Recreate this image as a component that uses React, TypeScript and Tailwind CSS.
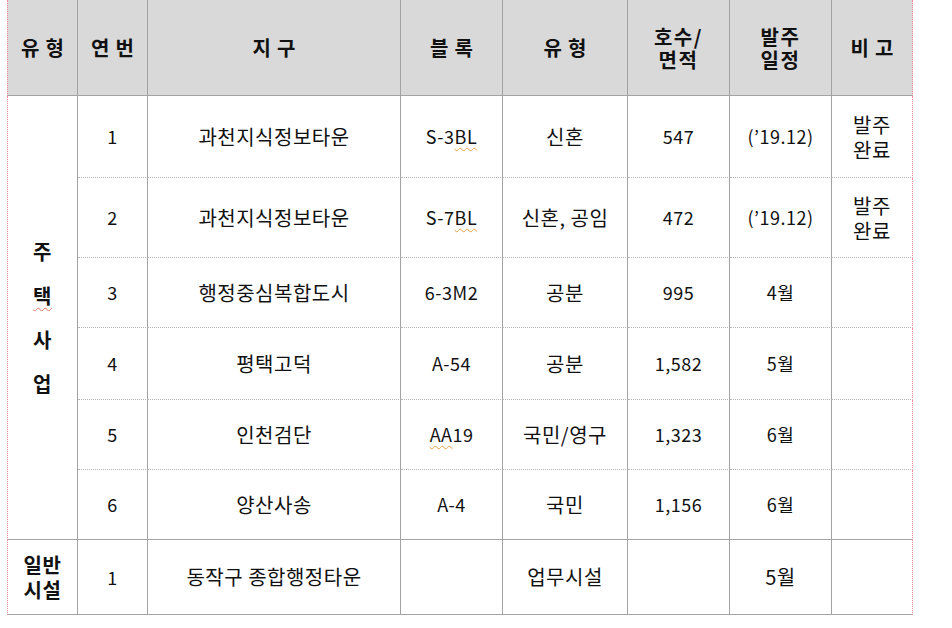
import type { ReactNode } from 'react';

const font = "font-['Noto_Sans_CJK_KR','Noto_Sans_CJK_SC',sans-serif]";

const cell = 'p-0 text-center align-middle border-r border-r-[#a3a3a3]';
const dotted = 'border-b border-b-[#b4b4b4] [border-bottom-style:dotted]!';
const solid = 'border-b border-b-[#a3a3a3]';
const pinkLeft = 'border-l border-l-[#f2899b] [border-left-style:dotted]!';
const pinkRight = 'border-r-[#f2899b] [border-right-style:dotted]!';
const num = 'text-[18px] tracking-[0.5px]';

function Sq({ children }: { children: ReactNode }) {
  return (
    <span className="underline decoration-wavy decoration-[#e8a046] decoration-1 underline-offset-[3px]">
      {children}
    </span>
  );
}

interface Row {
  no: string;
  district: ReactNode;
  block: ReactNode;
  type: string;
  units: string;
  date: string;
  note?: string[];
  h: string;
}

const rows: Row[] = [
  { no: '1', district: '과천지식정보타운', block: <>S-3<Sq>BL</Sq></>, type: '신혼', units: '547', date: '(’19.12)', note: ['발주', '완료'], h: 'h-[82px]' },
  { no: '2', district: '과천지식정보타운', block: <>S-7<Sq>BL</Sq></>, type: '신혼, 공임', units: '472', date: '(’19.12)', note: ['발주', '완료'], h: 'h-[80px]' },
  { no: '3', district: '행정중심복합도시', block: '6-3M2', type: '공분', units: '995', date: '4월', h: 'h-[70px]' },
  { no: '4', district: '평택고덕', block: 'A-54', type: '공분', units: '1,582', date: '5월', h: 'h-[72px]' },
  { no: '5', district: '인천검단', block: <><Sq>AA</Sq>19</>, type: '국민/영구', units: '1,323', date: '6월', h: 'h-[70px]' },
  { no: '6', district: '양산사송', block: 'A-4', type: '국민', units: '1,156', date: '6월', h: 'h-[70px]' },
];

export default function App() {
  return (
    <div className={`w-[952px] h-[628px] bg-white text-[#111] ${font}`}>
      <table className="ml-[7px] w-[906px] table-fixed border-separate border-spacing-0 text-[20px] tracking-[0.5px]">
        <colgroup>
          <col className="w-[71px]" />
          <col className="w-[70px]" />
          <col className="w-[253px]" />
          <col className="w-[102px]" />
          <col className="w-[125px]" />
          <col className="w-[102px]" />
          <col className="w-[102px]" />
          <col className="w-[81px]" />
        </colgroup>
        <thead>
          <tr className="h-[96px] bg-[#d9d9d9] font-bold">
            <th className={`${cell} ${solid} ${pinkLeft} tracking-[6px] pl-[6px]`}>유형</th>
            <th className={`${cell} ${solid} tracking-[6px] pl-[6px]`}>연번</th>
            <th className={`${cell} ${solid} tracking-[6px] pl-[6px]`}>지구</th>
            <th className={`${cell} ${solid} tracking-[6px] pl-[6px]`}>블록</th>
            <th className={`${cell} ${solid} tracking-[6px] pl-[6px]`}>유형</th>
            <th className={`${cell} ${solid} leading-[23px] tracking-[1.5px]`}>
              호수/
              <br />
              면적
            </th>
            <th className={`${cell} ${solid} leading-[23px] tracking-[1.5px]`}>
              발주
              <br />
              일정
            </th>
            <th className={`${cell} ${solid} ${pinkRight} tracking-[6px] pl-[6px]`}>비고</th>
          </tr>
        </thead>
        <tbody>
          {rows.map((r, i) => {
            const b = i === rows.length - 1 ? solid : dotted;
            return (
              <tr key={r.no} className={r.h}>
                {i === 0 && (
                  <td rowSpan={6} className={`${cell} ${solid} ${pinkLeft} font-bold leading-[44px]`}>
                    주
                    <br />
                    <span className="underline decoration-wavy decoration-[#e07a5a] decoration-1 underline-offset-[3px]">택</span>
                    <br />
                    사
                    <br />
                    업
                  </td>
                )}
                <td className={`${cell} ${b} ${num}`}>{r.no}</td>
                <td className={`${cell} ${b}`}>{r.district}</td>
                <td className={`${cell} ${b} ${num}`}>{r.block}</td>
                <td className={`${cell} ${b}`}>{r.type}</td>
                <td className={`${cell} ${b} ${num}`}>{r.units}</td>
                <td className={`${cell} ${b} ${num}`}>{r.date}</td>
                <td className={`${cell} ${b} ${pinkRight} leading-[25px]`}>
                  {r.note && (
                    <>
                      {r.note[0]}
                      <br />
                      {r.note[1]}
                    </>
                  )}
                </td>
              </tr>
            );
          })}
          <tr className="h-[75px]">
            <td className={`${cell} ${solid} ${pinkLeft} font-bold leading-[25px]`}>
              일반
              <br />
              시설
            </td>
            <td className={`${cell} ${solid} ${num}`}>1</td>
            <td className={`${cell} ${solid}`}>동작구 종합행정타운</td>
            <td className={`${cell} ${solid}`}></td>
            <td className={`${cell} ${solid}`}>업무시설</td>
            <td className={`${cell} ${solid}`}></td>
            <td className={`${cell} ${solid}`}>5월</td>
            <td className={`${cell} ${solid} ${pinkRight}`}></td>
          </tr>
        </tbody>
      </table>
    </div>
  );
}
